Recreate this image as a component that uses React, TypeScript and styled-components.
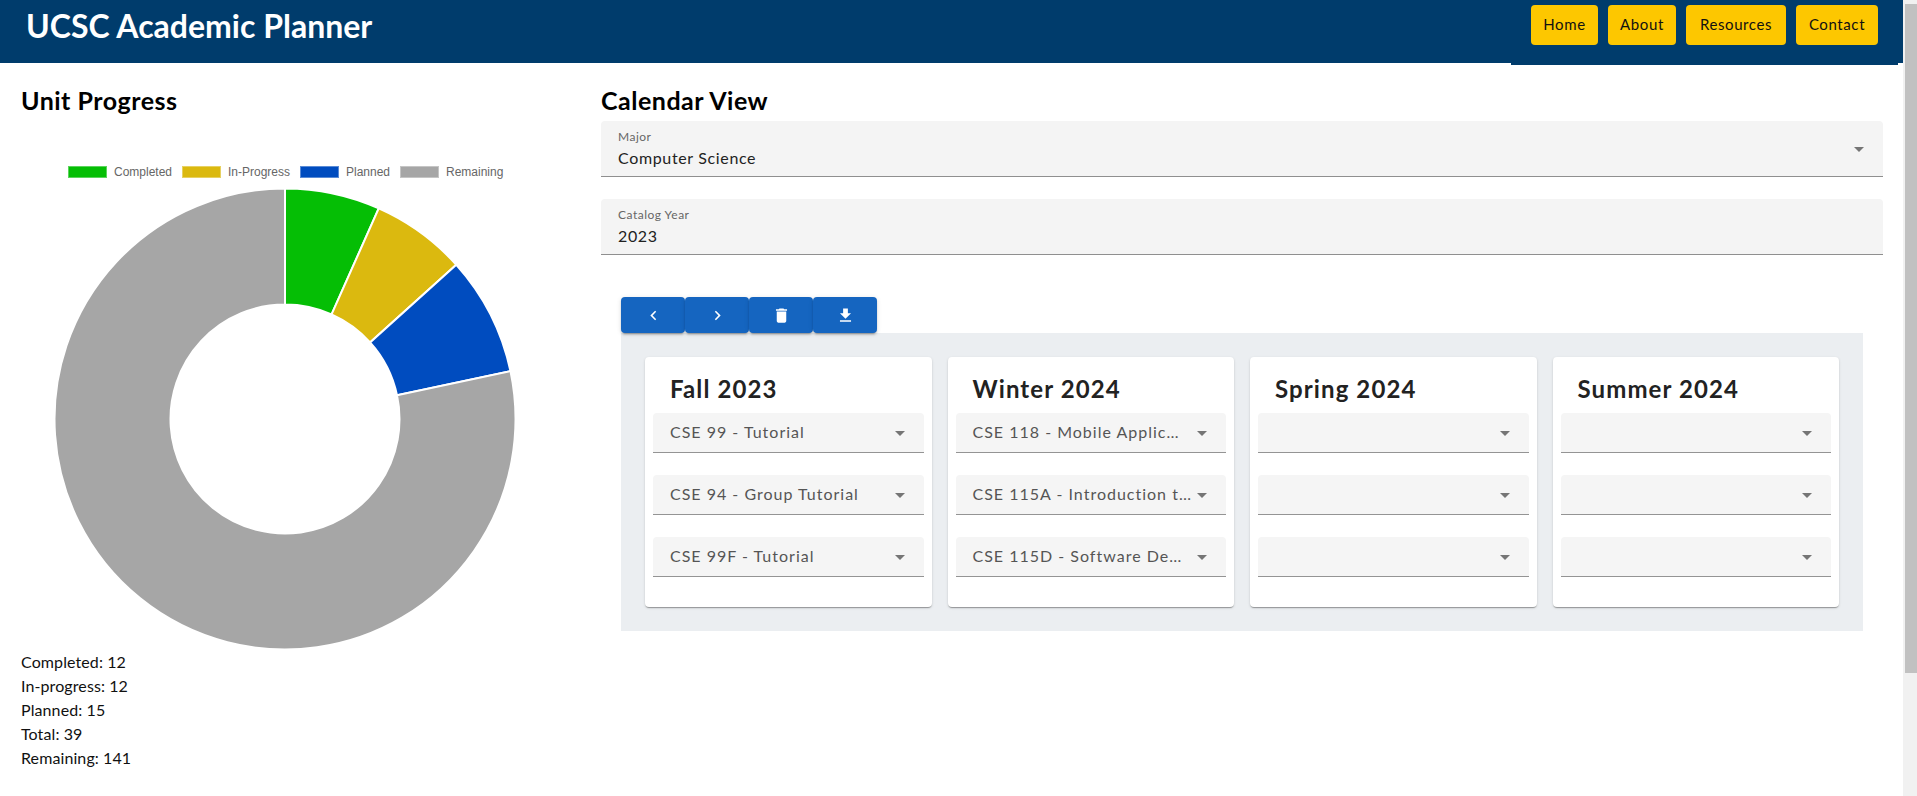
import React from "react";
import styled, { createGlobalStyle } from "styled-components";

const FONT = `"Lato", "Open Sans", sans-serif`;

const Global = createGlobalStyle`
  html, body { margin: 0; padding: 0; height: 100%; overflow: hidden; background: #fff; }
  #root { height: 100%; }
  * { box-sizing: border-box; }
`;

const Page = styled.div`
  display: flex;
  height: 796px;
  width: 1917px;
  overflow: hidden;
  font-family: ${FONT};
`;
const Main = styled.div`
  width: 1903px;
  flex: none;
`;
const Rail = styled.div`
  flex: 1;
  background: #f1f1f1;
  padding: 4px 0 0 2px;
`;
const Thumb = styled.div`
  height: 669px;
  background: #c1c1c1;
`;
const Header = styled.header`
  height: 63px;
  background: #003c6c;
  display: flex;
  justify-content: space-between;
  align-items: flex-start;
  padding: 0 5px 0 26px;
`;
const Title = styled.h1`
  margin: 7px 0 0;
  font-size: 32px;
  line-height: 38px;
  font-weight: 700;
  color: #fff;
  letter-spacing: 0;
`;
const Nav = styled.nav`
  height: 65px;
  width: 387px;
  background: #003c6c;
  padding: 5px 20px 0;
  display: flex;
  gap: 10px;
  align-items: flex-start;
  position: relative;
`;
const NavButton = styled.button<{ $w: number }>`
  width: ${(p) => p.$w}px;
  height: 40px;
  border: 0;
  border-radius: 4px;
  padding: 0 0 2px;
  background: #fdc700;
  color: #111;
  font-family: ${FONT};
  font-size: 15px;
  letter-spacing: 0.6px;
`;
const Body = styled.div`
  display: flex;
`;
const Left = styled.section`
  width: 601px;
  flex: none;
  padding-left: 21px;
`;
const Right = styled.section`
  width: 1282px;
  flex: none;
`;
const SectionTitle = styled.h2`
  margin: 19px 0 0;
  height: 39px;
  font-size: 25px;
  line-height: 36px;
  font-weight: 700;
  color: #000;
  letter-spacing: 0.5px;
`;
const Legend = styled.div`
  margin-top: 45px;
  height: 12px;
  display: flex;
  padding-left: 47px;
`;
const LegendItem = styled.div<{ $w: number }>`
  width: ${(p) => p.$w}px;
  display: flex;
  align-items: center;
  gap: 7px;
  font-family: "Liberation Sans", Arial, sans-serif;
  font-size: 12px;
  color: #666;
  white-space: nowrap;
`;
const Swatch = styled.span<{ $c: string }>`
  width: 39px;
  height: 12px;
  flex: none;
  background: ${(p) => p.$c};
  border: 1px solid rgba(255, 255, 255, 0.35);
`;
const Donut = styled.svg`
  display: block;
  margin: 10px 0 0 33px;
`;
const StatLine = styled.div`
  height: 24px;
  font-size: 16px;
  line-height: 24px;
  color: #111;
  letter-spacing: 0.1px;
`;
const FilledField = styled.div`
  position: relative;
  height: 56px;
  margin-bottom: 22px;
  background: #f4f4f4;
  border-radius: 4px 4px 0 0;
  border-bottom: 1.5px solid #8f8f8f;
  padding: 8px 17px 0;
`;
const FieldLabel = styled.div`
  font-size: 12px;
  line-height: 16px;
  color: #666;
  letter-spacing: 0.5px;
`;
const FieldValue = styled.div`
  margin-top: 1px;
  font-size: 16px;
  line-height: 24px;
  color: #222;
  letter-spacing: 0.65px;
`;
const Caret = styled.span<{ $size: "lg" | "sm" }>`
  position: absolute;
  right: 19px;
  top: ${(p) => (p.$size === "lg" ? "26px" : "18px")};
  width: 0;
  height: 0;
  border-left: 5px solid transparent;
  border-right: 5px solid transparent;
  border-top: 5px solid #757575;
`;
const Calendar = styled.div`
  padding: 20px 20px 0;
`;
const Toolbar = styled.div`
  display: flex;
  position: relative;
  z-index: 1;
`;
const ToolButton = styled.button`
  width: 64px;
  height: 36px;
  border: 0;
  border-radius: 4px;
  background: #1565c0;
  color: #fff;
  display: flex;
  align-items: center;
  justify-content: center;
  padding: 0;
  box-shadow: 0 3px 1px -2px rgba(0, 0, 0, 0.2), 0 2px 2px rgba(0, 0, 0, 0.14), 0 1px 5px rgba(0, 0, 0, 0.12);
`;
const Panel = styled.div`
  height: 298px;
  width: 1242px;
  background: #ebeef1;
  padding: 24px;
  display: grid;
  grid-template-columns: repeat(4, minmax(0, 1fr));
  gap: 16px;
`;
const Card = styled.div`
  height: 250px;
  background: #fff;
  border-radius: 4px;
  padding: 14px 8px 0;
  box-shadow: 0 2px 1px -1px rgba(0, 0, 0, 0.2), 0 1px 1px rgba(0, 0, 0, 0.14), 0 1px 3px rgba(0, 0, 0, 0.12);
`;
const CardTitle = styled.h3`
  margin: 0 0 6px;
  padding-left: 17px;
  height: 36px;
  font-size: 24px;
  line-height: 36px;
  font-weight: 700;
  color: #222;
  letter-spacing: 1.1px;
`;
const SelectWrap = styled.div`
  position: relative;
`;
const CourseSelect = styled.div`
  height: 40px;
  margin-bottom: 22px;
  background: #f5f5f5;
  border-radius: 4px 4px 0 0;
  border-bottom: 1.5px solid #949494;
  padding: 0 30px 0 17px;
  font-size: 16px;
  line-height: 38px;
  color: #555;
  letter-spacing: 1px;
  white-space: nowrap;
`;

const OUTER = 230.5;
const INNER = 114.5;
const polar = (a: number, r: number) => {
  const t = ((a - 90) * Math.PI) / 180;
  return [231 + r * Math.cos(t), 231 + r * Math.sin(t)];
};
const slice = (from: number, to: number) => {
  const [x1, y1] = polar(from, OUTER);
  const [x2, y2] = polar(to, OUTER);
  const [x3, y3] = polar(to, INNER);
  const [x4, y4] = polar(from, INNER);
  const large = to - from > 180 ? 1 : 0;
  return `M${x1} ${y1}A${OUTER} ${OUTER} 0 ${large} 1 ${x2} ${y2}L${x3} ${y3}A${INNER} ${INNER} 0 ${large} 0 ${x4} ${y4}Z`;
};

const legend = [
  { name: "Completed", color: "#05be05", value: 12, w: 114 },
  { name: "In-Progress", color: "#dbb90f", value: 12, w: 118 },
  { name: "Planned", color: "#004cbf", value: 15, w: 100 },
  { name: "Remaining", color: "#a6a6a6", value: 141, w: 110 },
];

const stats = ["Completed: 12", "In-progress: 12", "Planned: 15", "Total: 39", "Remaining: 141"];

const quarters = [
  { name: "Fall 2023", courses: ["CSE 99 - Tutorial", "CSE 94 - Group Tutorial", "CSE 99F - Tutorial"] },
  {
    name: "Winter 2024",
    courses: ["CSE 118 - Mobile Applic…", "CSE 115A - Introduction t…", "CSE 115D - Software De…"],
  },
  { name: "Spring 2024", courses: ["", "", ""] },
  { name: "Summer 2024", courses: ["", "", ""] },
];

const Glyph = ({ d }: { d: string }) => (
  <svg width="19" height="19" viewBox="0 0 24 24" fill="currentColor">
    <path d={d} />
  </svg>
);

export default function App() {
  let angle = 0;
  const arcs = legend.map((l) => {
    const from = angle;
    angle += (l.value / 180) * 360;
    return { ...l, from, to: angle };
  });
  return (
    <Page>
      <Global />
      <Main>
        <Header>
          <Title>UCSC Academic Planner</Title>
          <Nav>
            <NavButton $w={67}>Home</NavButton>
            <NavButton $w={68}>About</NavButton>
            <NavButton $w={100}>Resources</NavButton>
            <NavButton $w={82}>Contact</NavButton>
          </Nav>
        </Header>
        <Body>
          <Left>
            <SectionTitle>Unit Progress</SectionTitle>
            <Legend>
              {legend.map((l) => (
                <LegendItem key={l.name} $w={l.w}>
                  <Swatch $c={l.color} />
                  {l.name}
                </LegendItem>
              ))}
            </Legend>
            <Donut width="462" height="462" viewBox="0 0 462 462">
              {arcs.map((a) => (
                <path key={a.name} d={slice(a.from, a.to)} fill={a.color} stroke="#fff" strokeWidth="2" />
              ))}
            </Donut>
            {stats.map((s) => (
              <StatLine key={s}>{s}</StatLine>
            ))}
          </Left>
          <Right>
            <SectionTitle>Calendar View</SectionTitle>
            <FilledField>
              <FieldLabel>Major</FieldLabel>
              <FieldValue>Computer Science</FieldValue>
              <Caret $size="lg" />
            </FilledField>
            <FilledField>
              <FieldLabel>Catalog Year</FieldLabel>
              <FieldValue>2023</FieldValue>
            </FilledField>
            <Calendar>
              <Toolbar>
                <ToolButton aria-label="Previous">
                  <Glyph d="M15.41 7.41 14 6l-6 6 6 6 1.41-1.41L10.83 12z" />
                </ToolButton>
                <ToolButton aria-label="Next">
                  <Glyph d="M10 6 8.59 7.41 13.17 12l-4.58 4.59L10 18l6-6z" />
                </ToolButton>
                <ToolButton aria-label="Delete">
                  <Glyph d="M6 19c0 1.1.9 2 2 2h8c1.1 0 2-.9 2-2V7H6zM19 4h-3.5l-1-1h-5l-1 1H5v2h14z" />
                </ToolButton>
                <ToolButton aria-label="Download">
                  <Glyph d="M19 9h-4V3H9v6H5l7 7zM5 18v2h14v-2z" />
                </ToolButton>
              </Toolbar>
              <Panel>
                {quarters.map((q) => (
                  <Card key={q.name}>
                    <CardTitle>{q.name}</CardTitle>
                    {q.courses.map((c, i) => (
                      <SelectWrap key={i}>
                        <CourseSelect>{c}</CourseSelect>
                        <Caret $size="sm" />
                      </SelectWrap>
                    ))}
                  </Card>
                ))}
              </Panel>
            </Calendar>
          </Right>
        </Body>
      </Main>
      <Rail>
        <Thumb />
      </Rail>
    </Page>
  );
}
